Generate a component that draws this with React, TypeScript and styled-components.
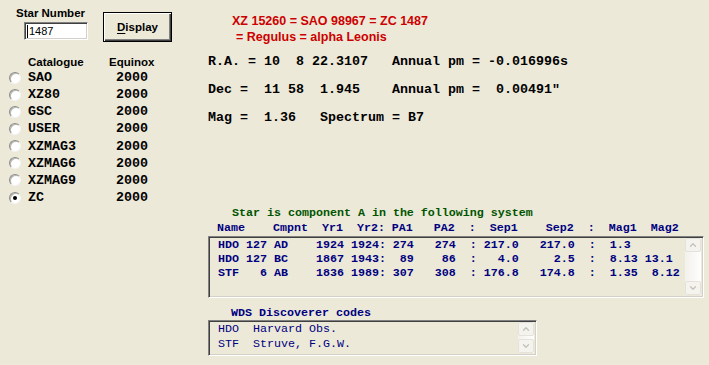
import React from "react";
import styled, { createGlobalStyle } from "styled-components";
import { ChevronUp, ChevronDown } from "lucide-react";

const GlobalStyle = createGlobalStyle`
  html, body {
    margin: 0;
    padding: 0;
    background: #ece9d8;
  }
`;

const Window = styled.div`
  display: flex;
  width: 709px;
  height: 365px;
  background: #ece9d8;
  overflow: hidden;
  font-family: "Liberation Sans", Arial, sans-serif;
`;

const LeftPanel = styled.div`
  width: 208px;
  flex: none;
  display: flex;
  flex-direction: column;
`;

const TopRow = styled.div`
  display: flex;
  align-items: flex-start;
  padding: 6px 0 0 16px;
`;

const Field = styled.div`
  display: flex;
  flex-direction: column;
`;

const Label = styled.div`
  font-size: 11.5px;
  font-weight: bold;
  line-height: 14px;
  color: #000;
  white-space: nowrap;
`;

const TextBox = styled.div`
  box-sizing: border-box;
  width: 64px;
  height: 18px;
  margin: 2px 0 0 8px;
  padding-left: 2px;
  display: flex;
  align-items: center;
  background: #fff;
  border: 1px solid;
  border-color: #808080 #fff #fff #808080;
  box-shadow: inset 1px 1px 0 #404040, inset -1px -1px 0 #d4d0c8;
  font-size: 11px;
  color: #000;
`;

const Caret = styled.span`
  width: 1px;
  height: 13px;
  background: #000;
  margin-right: 1px;
`;

const Button = styled.div`
  box-sizing: border-box;
  width: 69px;
  height: 30px;
  margin: 6px 0 0 15px;
  display: flex;
  align-items: center;
  justify-content: center;
  border: 1px solid #000;
  background: #ece9d8;
  box-shadow: inset 1px 1px 0 #fff, inset -1px -1px 0 #404040,
    inset -2px -2px 0 #808080;
  font-size: 11.5px;
  font-weight: bold;
  color: #000;

  u {
    text-decoration-thickness: 1px;
    text-underline-offset: 2px;
  }
`;

const Headings = styled.div`
  display: flex;
  margin-top: 13px;
  padding-left: 28px;
`;

const HeadCell = styled(Label)<{ $width?: number }>`
  width: ${(p) => (p.$width ? `${p.$width}px` : "auto")};
`;

const CatalogueList = styled.div`
  display: flex;
  flex-direction: column;
`;

const CatalogueRow = styled.div`
  display: flex;
  align-items: center;
  height: 17.15px;
  padding-left: 9px;
  font-family: "Liberation Mono", "Courier New", monospace;
  font-size: 13.33px;
  font-weight: bold;
  color: #000;
`;

const Radio = styled.span<{ $checked?: boolean }>`
  box-sizing: border-box;
  position: relative;
  width: 12px;
  height: 12px;
  margin-right: 7px;
  border-radius: 50%;
  background: #fff;
  border: 1px solid;
  border-color: #8c8c8c #f4f4f4 #f4f4f4 #8c8c8c;
  box-shadow: inset 1px 1px 0 #b8b8b0;

  &::after {
    content: "";
    display: ${(p) => (p.$checked ? "block" : "none")};
    position: absolute;
    left: 3px;
    top: 3px;
    width: 4px;
    height: 4px;
    border-radius: 50%;
    background: #000;
  }
`;

const CatName = styled.span`
  width: 88px;
  white-space: pre;
`;

const RightPanel = styled.div`
  flex: 1;
  display: flex;
  flex-direction: column;
`;

const Ident = styled.div`
  padding: 13px 0 0 24px;
  font-size: 12.5px;
  font-weight: bold;
  line-height: 16px;
  color: #cc0000;
`;

const IdentLine = styled.div<{ $indent?: number }>`
  padding-left: ${(p) => p.$indent || 0}px;
  white-space: pre;
`;

const Coords = styled.div`
  margin-top: 3px;
  font-family: "Liberation Mono", "Courier New", monospace;
  font-size: 13.33px;
  font-weight: bold;
  line-height: 28px;
  color: #000;
  white-space: pre;
`;

const Mono = styled.div<{ $color: string; $bold?: boolean }>`
  font-family: "Liberation Mono", "Courier New", monospace;
  font-size: 11.67px;
  font-weight: ${(p) => (p.$bold ? "bold" : "normal")};
  color: ${(p) => p.$color};
  white-space: pre;
`;

const SystemTitle = styled(Mono)`
  margin-top: 74px;
  padding-left: 24px;
  line-height: 15px;
`;

const ColumnHeader = styled(Mono)`
  padding-left: 9px;
  line-height: 15px;
`;

const ListBox = styled.div<{ $width: number; $height: number }>`
  box-sizing: border-box;
  width: ${(p) => p.$width}px;
  height: ${(p) => p.$height}px;
  display: flex;
  border: 1px solid;
  border-color: #808080 #fff #fff #808080;
  box-shadow: inset 1px 1px 0 #404040, inset -1px -1px 0 #d4d0c8;
  padding: 1px 2px 2px 1px;
`;

const ListRows = styled.div<{ $lineHeight: number }>`
  flex: 1;
  padding-left: 8px;
  line-height: ${(p) => p.$lineHeight}px;
`;

const ScrollBar = styled.div`
  width: 16px;
  display: flex;
  flex-direction: column;
  justify-content: space-between;
  background: linear-gradient(to right, #f3f1ec, #fefefe);
`;

const ScrollButton = styled.div`
  box-sizing: border-box;
  width: 16px;
  height: 14px;
  display: flex;
  align-items: center;
  justify-content: center;
  border: 1px solid #e4e2da;
  border-radius: 2px;
  background: #f4f3ee;
  color: #c4c2b8;
`;

const WdsTitle = styled(Mono)`
  margin-top: 8px;
  padding-left: 23px;
  line-height: 14px;
`;

const NAVY = "#000080";
const GREEN = "#005400";

const catalogues = ["SAO", "XZ80", "GSC", "USER", "XZMAG3", "XZMAG6", "XZMAG9", "ZC"];

const systemRows = [
  "HDO 127 AD    1924 1924: 274   274  : 217.0   217.0  :  1.3",
  "HDO 127 BC    1867 1943:  89    86  :   4.0     2.5  :  8.13 13.1",
  "STF   6 AB    1836 1989: 307   308  : 176.8   174.8  :  1.35  8.12",
];

const discoverers = ["HDO  Harvard Obs.", "STF  Struve, F.G.W."];

const Scroller = () => (
  <ScrollBar>
    <ScrollButton>
      <ChevronUp size={10} strokeWidth={3} />
    </ScrollButton>
    <ScrollButton>
      <ChevronDown size={10} strokeWidth={3} />
    </ScrollButton>
  </ScrollBar>
);

const App: React.FC = () => {
  return (
    <Window>
      <GlobalStyle />
      <LeftPanel>
        <TopRow>
          <Field>
            <Label>Star Number</Label>
            <TextBox>
              <Caret />
              1487
            </TextBox>
          </Field>
          <Button>
            <span>
              <u>D</u>isplay
            </span>
          </Button>
        </TopRow>
        <Headings>
          <HeadCell $width={81}>Catalogue</HeadCell>
          <HeadCell>Equinox</HeadCell>
        </Headings>
        <CatalogueList>
          {catalogues.map((name) => (
            <CatalogueRow key={name}>
              <Radio $checked={name === "ZC"} />
              <CatName>{name}</CatName>
              <span>2000</span>
            </CatalogueRow>
          ))}
        </CatalogueList>
      </LeftPanel>

      <RightPanel>
        <Ident>
          <IdentLine>XZ 15260 = SAO 98967 = ZC 1487</IdentLine>
          <IdentLine $indent={4}>= Regulus = alpha Leonis</IdentLine>
        </Ident>
        <Coords>
          <div>R.A. = 10  8 22.3107   Annual pm = -0.016996s</div>
          <div>Dec =  11 58  1.945    Annual pm =  0.00491"</div>
          <div>Mag =  1.36   Spectrum = B7</div>
        </Coords>

        <SystemTitle $color={GREEN} $bold>
          Star is component A in the following system
        </SystemTitle>
        <ColumnHeader $color={NAVY} $bold>
          Name    Cmpnt  Yr1  Yr2: PA1   PA2  :  Sep1    Sep2  :  Mag1  Mag2
        </ColumnHeader>
        <ListBox $width={496} $height={62}>
          <ListRows $lineHeight={14}>
            {systemRows.map((row) => (
              <Mono key={row} $color={NAVY} $bold>
                {row}
              </Mono>
            ))}
          </ListRows>
          <Scroller />
        </ListBox>

        <WdsTitle $color={NAVY} $bold>
          WDS Discoverer codes
        </WdsTitle>
        <ListBox $width={329} $height={36}>
          <ListRows $lineHeight={14.5}>
            {discoverers.map((row) => (
              <Mono key={row} $color={NAVY}>
                {row}
              </Mono>
            ))}
          </ListRows>
          <Scroller />
        </ListBox>
      </RightPanel>
    </Window>
  );
};

export default App;
